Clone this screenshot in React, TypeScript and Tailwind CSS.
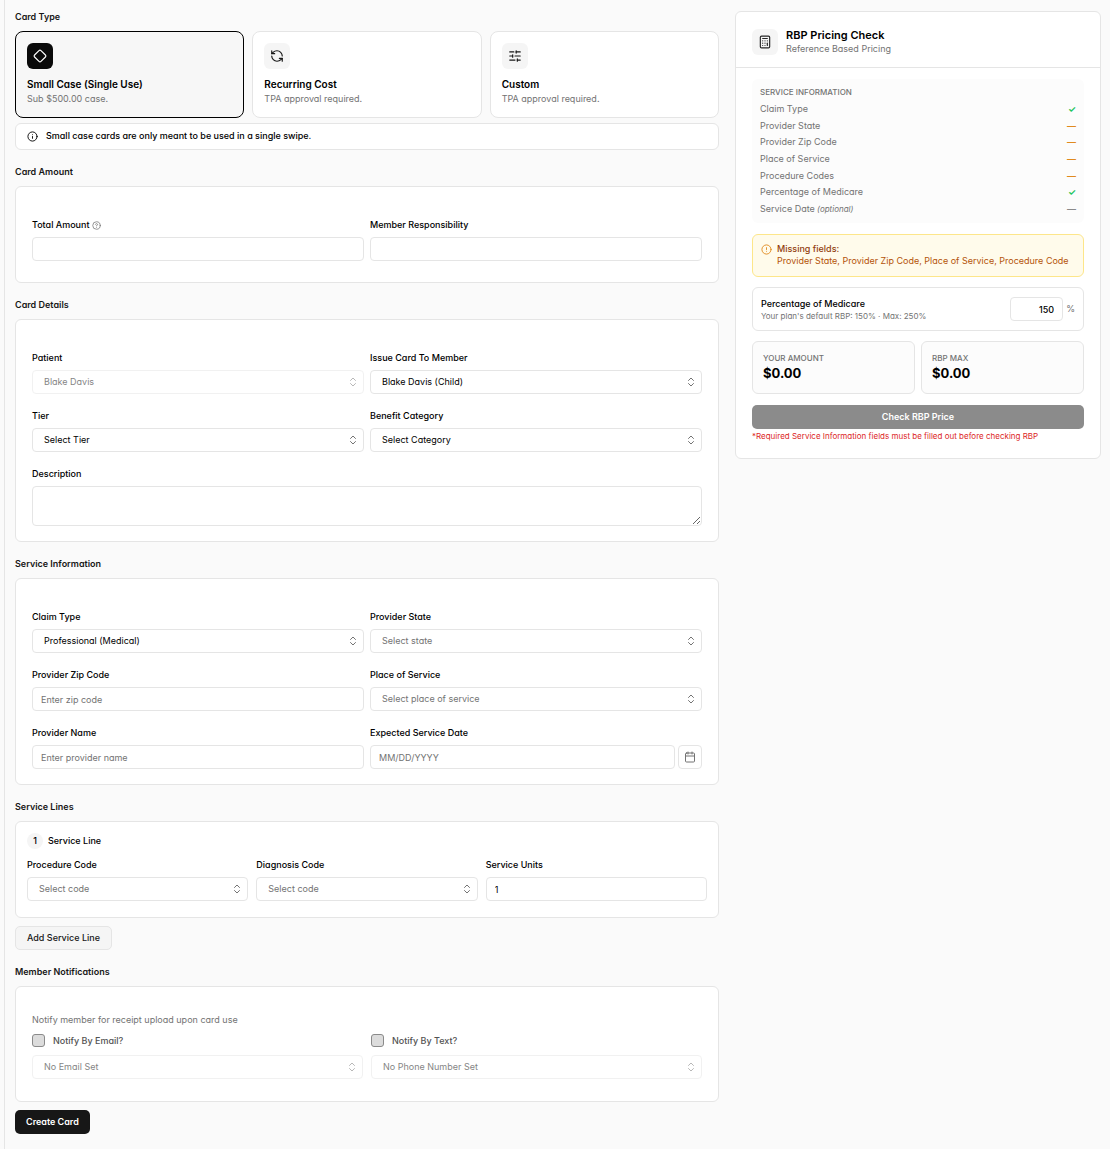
import { useState } from "react";
import type { ReactNode } from "react";
import {
  Calculator,
  Calendar,
  ChevronsUpDown,
  CircleAlert,
  CircleHelp,
  Diamond,
  Info,
  RefreshCcw,
  SlidersHorizontal,
} from "lucide-react";
import clsx from "clsx";

const CARD_TYPES = [
  { id: "small", title: "Small Case (Single Use)", text: "Sub $500.00 case.", Icon: Diamond },
  { id: "recurring", title: "Recurring Cost", text: "TPA approval required.", Icon: RefreshCcw },
  { id: "custom", title: "Custom", text: "TPA approval required.", Icon: SlidersHorizontal },
];

type Status = "done" | "missing" | "optional";

const CHECKS: { label: string; status: Status }[] = [
  { label: "Claim Type", status: "done" },
  { label: "Provider State", status: "missing" },
  { label: "Provider Zip Code", status: "missing" },
  { label: "Place of Service", status: "missing" },
  { label: "Procedure Codes", status: "missing" },
  { label: "Percentage of Medicare", status: "done" },
  { label: "Service Date", status: "optional" },
];

const STATUS_COLORS: Record<Status, string> = {
  done: "text-[#22c55e]",
  missing: "text-[#e08a1e]",
  optional: "text-[#8a8a8a]",
};

const inputClass =
  "block h-6 w-full min-w-0 rounded border border-neutral-200 bg-white px-2 pt-px text-[9px] text-black outline-none placeholder:text-neutral-500";

function Label({ htmlFor, children }: { htmlFor: string; children: ReactNode }) {
  return (
    <label htmlFor={htmlFor} className="mb-1.5 flex items-center gap-0.5 text-[9px] leading-3 font-medium text-black">
      {children}
    </label>
  );
}

interface SelectProps {
  id: string;
  value: string;
  muted?: boolean;
  disabled?: boolean;
  label?: string;
}

function Select({ id, value, muted, disabled, label }: SelectProps) {
  return (
    <div className={clsx("relative", disabled && "opacity-50")}>
      <select
        id={id}
        aria-label={label}
        disabled={disabled}
        className={clsx(
          "block h-6 w-full appearance-none rounded border border-neutral-200 bg-white pr-6 pl-[11px] text-[9px] outline-none",
          muted ? "text-neutral-500" : "text-black"
        )}
      >
        <option>{value}</option>
      </select>
      <ChevronsUpDown size={12} className="pointer-events-none absolute top-1.5 right-[5px] text-neutral-500" />
    </div>
  );
}

function Section({ title, children }: { title: string; children: ReactNode }) {
  return (
    <section className="mt-4">
      <h2 className="mb-2 text-[9px] leading-3 font-semibold text-neutral-900">{title}</h2>
      {children}
    </section>
  );
}

function PricingPanel() {
  return (
    <aside className="mt-[11px] w-[366px] shrink-0 self-start rounded-md border border-neutral-200 bg-white">
      <div className="flex h-14 items-center gap-2 border-b border-neutral-200 px-4 pt-1">
        <div className="flex size-[26px] items-center justify-center rounded-md bg-neutral-100">
          <Calculator size={14} className="text-neutral-800" />
        </div>
        <div className="pb-px">
          <h2 className="text-[11px] leading-4 font-semibold text-black">RBP Pricing Check</h2>
          <p className="text-[9px] leading-3 text-neutral-500">Reference Based Pricing</p>
        </div>
      </div>

      <div className="px-4 pt-[11px] pb-4">
        <div className="rounded-md bg-[#fcfcfc] px-2 pt-[7px] pb-2">
          <h3 className="mb-[5px] text-[8px] leading-3 font-medium text-neutral-500 uppercase">Service Information</h3>
          <ul className="flex h-28 flex-col justify-between text-[9px] leading-3 text-neutral-500">
            {CHECKS.map((c) => (
              <li key={c.label} className="flex items-center justify-between">
                <span>
                  {c.label}
                  {c.status === "optional" && <em className="text-[8px]"> (optional)</em>}
                </span>
                <span className={clsx("font-bold", STATUS_COLORS[c.status])}>{c.status === "done" ? "✓" : "—"}</span>
              </li>
            ))}
          </ul>
        </div>

        <div className="mt-[11px] flex gap-[5px] rounded-md border border-[#fde68a] bg-[#fffbeb] px-2 pt-2 pb-[9px] text-[9px] leading-3">
          <CircleAlert size={11} className="mt-px shrink-0 text-[#e08a1e]" />
          <div>
            <p className="font-medium text-[#92400e]">Missing fields:</p>
            <p className="text-[#b45309]">Provider State, Provider Zip Code, Place of Service, Procedure Code</p>
          </div>
        </div>

        <div className="mt-2.5 flex h-11 items-center justify-between rounded-md border border-neutral-200 px-2">
          <div className="pt-px leading-3">
            <label htmlFor="medicare" className="block text-[9px] font-medium text-black">Percentage of Medicare</label>
            <p className="text-[8px] text-neutral-500">Your plan's default RBP: 150% · Max: 250%</p>
          </div>
          <div className="flex items-center gap-[3px]">
            <input id="medicare" defaultValue="150" className={clsx(inputClass, "max-w-[53px] text-right font-medium")} />
            <span className="text-[9px] text-neutral-500">%</span>
          </div>
        </div>

        <div className="mt-2.5 grid grid-cols-2 gap-1.5">
          {["Your Amount", "RBP Max"].map((label) => (
            <div key={label} className="rounded-md border border-neutral-200 bg-[#fcfcfc] px-2.5 pt-2.5 pb-[11px]">
              <p className="text-[8px] leading-3 font-medium text-neutral-500 uppercase">{label}</p>
              <p className="text-[13px] leading-[18px] font-bold text-black">$0.00</p>
            </div>
          ))}
        </div>

        <button disabled className="mt-[11px] h-6 w-full rounded-[5px] bg-[#8b8b8b] text-[9px] font-semibold text-white">
          Check RBP Price
        </button>
        <p className="mt-px text-[8px] leading-3 text-[#dc2626]">
          *Required Service Information fields must be filled out before checking RBP
        </p>
      </div>
    </aside>
  );
}

export default function App() {
  const [cardType, setCardType] = useState("small");

  return (
    <div className="min-h-screen bg-[#fafafa] pl-1 font-['Inter',sans-serif] [font-feature-settings:'cv11']">
      <div className="flex min-h-screen items-start gap-4 border-l border-neutral-200 pr-[9px] pl-2.5">
        <main className="min-w-0 flex-1 pt-[11px] pb-[15px]">
          <h2 className="mb-2 text-[9px] leading-3 font-semibold text-neutral-900">Card Type</h2>
          <div className="grid grid-cols-3 gap-2">
            {CARD_TYPES.map(({ id, title, text, Icon }) => {
              const selected = cardType === id;
              return (
                <button
                  key={id}
                  onClick={() => setCardType(id)}
                  className={clsx(
                    "rounded-lg border p-[11px] text-left",
                    selected ? "border-black bg-[#f7f7f7]" : "border-neutral-200 bg-white"
                  )}
                >
                  <span
                    className={clsx(
                      "mb-2 flex size-[26px] items-center justify-center rounded-md",
                      selected ? "bg-neutral-950 text-white" : "bg-neutral-100 text-neutral-900"
                    )}
                  >
                    <Icon size={14} />
                  </span>
                  <span className="block text-[10px] leading-[15px] font-semibold text-black">{title}</span>
                  <span className="block text-[9px] leading-[14px] text-neutral-500">{text}</span>
                </button>
              );
            })}
          </div>
          <div className="mt-[5px] flex h-[27px] items-center gap-2 rounded-md border border-neutral-200 bg-white px-[11px] pb-px text-[9px] font-medium text-black">
            <Info size={11} />
            Small case cards are only meant to be used in a single swipe.
          </div>

          <Section title="Card Amount">
            <div className="grid grid-cols-2 gap-1.5 rounded-md border border-neutral-200 bg-white px-4 pt-8 pb-[21px]">
              <div>
                <Label htmlFor="total">
                  Total Amount <CircleHelp size={9} className="text-neutral-500" />
                </Label>
                <input id="total" className={inputClass} />
              </div>
              <div>
                <Label htmlFor="responsibility">Member Responsibility</Label>
                <input id="responsibility" className={inputClass} />
              </div>
            </div>
          </Section>

          <Section title="Card Details">
            <div className="grid grid-cols-2 gap-x-1.5 gap-y-4 rounded-md border border-neutral-200 bg-white px-4 pt-8 pb-[15px]">
              <div>
                <Label htmlFor="patient">Patient</Label>
                <Select id="patient" value="Blake Davis" disabled />
              </div>
              <div>
                <Label htmlFor="issue-to">Issue Card To Member</Label>
                <Select id="issue-to" value="Blake Davis (Child)" />
              </div>
              <div>
                <Label htmlFor="tier">Tier</Label>
                <Select id="tier" value="Select Tier" />
              </div>
              <div>
                <Label htmlFor="category">Benefit Category</Label>
                <Select id="category" value="Select Category" />
              </div>
              <div className="col-span-2">
                <Label htmlFor="description">Description</Label>
                <textarea
                  id="description"
                  className="block h-10 w-full rounded border border-neutral-200 bg-white px-2 py-1 text-[9px] outline-none"
                />
              </div>
            </div>
          </Section>

          <Section title="Service Information">
            <div className="grid grid-cols-2 gap-x-1.5 gap-y-4 rounded-md border border-neutral-200 bg-white px-4 pt-8 pb-[15px]">
              <div>
                <Label htmlFor="claim-type">Claim Type</Label>
                <Select id="claim-type" value="Professional (Medical)" />
              </div>
              <div>
                <Label htmlFor="state">Provider State</Label>
                <Select id="state" value="Select state" muted />
              </div>
              <div>
                <Label htmlFor="zip">Provider Zip Code</Label>
                <input id="zip" placeholder="Enter zip code" className={inputClass} />
              </div>
              <div>
                <Label htmlFor="place">Place of Service</Label>
                <Select id="place" value="Select place of service" muted />
              </div>
              <div>
                <Label htmlFor="provider">Provider Name</Label>
                <input id="provider" placeholder="Enter provider name" className={inputClass} />
              </div>
              <div>
                <Label htmlFor="date">Expected Service Date</Label>
                <div className="flex gap-[3px]">
                  <input id="date" placeholder="MM/DD/YYYY" className={inputClass} />
                  <button
                    aria-label="Pick a date"
                    className="flex size-6 shrink-0 items-center justify-center rounded border border-neutral-200 bg-white text-neutral-500"
                  >
                    <Calendar size={12} />
                  </button>
                </div>
              </div>
            </div>
          </Section>

          <Section title="Service Lines">
            <div className="rounded-md border border-neutral-200 bg-white px-[11px] pt-[11px] pb-4">
              <div className="mb-2.5 flex items-center gap-[5px] text-[9px] font-medium text-black">
                <span className="flex size-4 items-center justify-center rounded-full bg-neutral-100">1</span>
                Service Line
              </div>
              <div className="grid grid-cols-3 gap-2">
                <div>
                  <Label htmlFor="procedure">Procedure Code</Label>
                  <Select id="procedure" value="Select code" muted />
                </div>
                <div>
                  <Label htmlFor="diagnosis">Diagnosis Code</Label>
                  <Select id="diagnosis" value="Select code" muted />
                </div>
                <div>
                  <Label htmlFor="units">Service Units</Label>
                  <input id="units" defaultValue="1" className={inputClass} />
                </div>
              </div>
            </div>
            <button className="mt-2 block h-6 rounded-[5px] border border-neutral-200 bg-neutral-100 px-[11px] text-[9px] font-medium text-neutral-900">
              Add Service Line
            </button>
          </Section>

          <Section title="Member Notifications">
            <div className="rounded-md border border-neutral-200 bg-white px-4 pt-[27px] pb-[22px]">
              <p className="mb-2 text-[9px] leading-3 text-neutral-500">Notify member for receipt upload upon card use</p>
              <div className="grid grid-cols-2 gap-2">
                {[
                  { id: "email", label: "Notify By Email?", value: "No Email Set" },
                  { id: "text", label: "Notify By Text?", value: "No Phone Number Set" },
                ].map((n) => (
                  <div key={n.id}>
                    <div className="mb-2 flex items-center gap-2">
                      <input
                        id={`notify-${n.id}`}
                        type="checkbox"
                        disabled
                        className="size-[13px] appearance-none rounded-[3px] border border-[#8a8a8a] bg-[#dcdcdc]"
                      />
                      <label htmlFor={`notify-${n.id}`} className="text-[9px] leading-3 font-medium text-neutral-600">
                        {n.label}
                      </label>
                    </div>
                    <Select id={n.id} value={n.value} label={n.label} disabled />
                  </div>
                ))}
              </div>
            </div>
          </Section>

          <button className="mt-2 block h-6 rounded-[5px] bg-neutral-900 px-[11px] text-[9px] font-semibold text-white">
            Create Card
          </button>
        </main>

        <PricingPanel />
      </div>
    </div>
  );
}
